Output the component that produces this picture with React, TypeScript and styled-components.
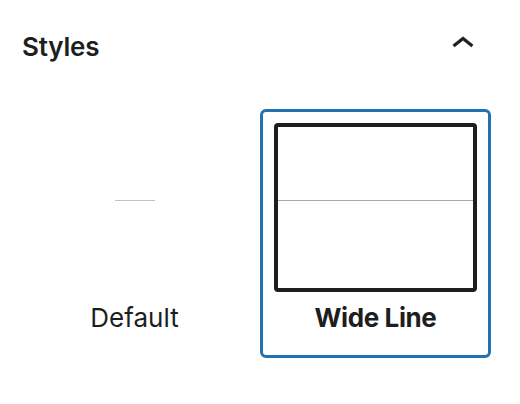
import React, { useState } from 'react';
import styled, { createGlobalStyle } from 'styled-components';

const GlobalStyle = createGlobalStyle`
    html, body {
        margin: 0;
        padding: 0;
        background: #ffffff;
    }
    body {
        font-family: Inter, "Noto Sans", "Liberation Sans", sans-serif;
        color: #1e1e1e;
    }
`;

const Panel = styled.div`
    width: 520px;
    height: 404px;
    box-sizing: border-box;
    padding: 22px 29px 0 19px;
`;

const Header = styled.div`
    display: flex;
    justify-content: space-between;
    align-items: flex-start;
`;

const Title = styled.h2`
    margin: 9px 0 0 3px;
    font-size: 26px;
    line-height: 32px;
    font-weight: 600;
    letter-spacing: -0.2px;
`;

const Toggle = styled.button`
    border: 0;
    background: transparent;
    padding: 0;
    margin-right: 6px;
    width: 44px;
    height: 44px;
    color: #1e1e1e;
    cursor: pointer;
`;

const Variants = styled.div`
    display: grid;
    grid-template-columns: repeat(2, 1fr);
    gap: 10px;
    margin-top: 43px;
`;

const Card = styled.button<{ $active: boolean }>`
    display: flex;
    flex-direction: column;
    align-items: stretch;
    box-sizing: border-box;
    padding: 11px 11px 21px;
    border: 3px solid ${(p) => (p.$active ? '#2271b1' : 'transparent')};
    border-radius: 6px;
    background: #ffffff;
    font-family: inherit;
    color: #1e1e1e;
    cursor: pointer;
`;

const Preview = styled.div<{ $active: boolean }>`
    height: 169px;
    box-sizing: border-box;
    padding-top: 73px;
    display: flex;
    flex-direction: column;
    align-items: center;
    border: 4px solid ${(p) => (p.$active ? '#1e1e1e' : 'transparent')};
    border-radius: 4px;
`;

const Separator = styled.hr<{ $wide: boolean }>`
    margin: 0;
    border: 0;
    height: 1px;
    width: ${(p) => (p.$wide ? '100%' : '40px')};
    background: ${(p) => (p.$wide ? '#a7aaad' : '#bcc4ca')};
`;

const Label = styled.span<{ $active: boolean }>`
    margin-top: 10px;
    font-size: 26px;
    line-height: 32px;
    font-weight: ${(p) => (p.$active ? 700 : 400)};
    letter-spacing: ${(p) => (p.$active ? '-0.4px' : '0')};
    text-align: center;
`;

const variants = [
    { name: 'default', label: 'Default', wide: false },
    { name: 'wide', label: 'Wide Line', wide: true },
];

export default function App() {
    const [active, setActive] = useState('wide');

    return (
        <Panel>
            <GlobalStyle />
            <Header>
                <Title>Styles</Title>
                <Toggle aria-label="Collapse">
                    <svg width="44" height="44" viewBox="0 0 24 24" fill="currentColor">
                        <path
                            d="M6.5 12.4L12 8l5.5 4.4-.9 1.2L12 10l-4.6 3.6-1-1.2z"
                            stroke="currentColor"
                            strokeWidth="0.3"
                            strokeLinejoin="round"
                        />
                    </svg>
                </Toggle>
            </Header>
            <Variants>
                {variants.map((v) => (
                    <Card key={v.name} $active={active === v.name} onClick={() => setActive(v.name)}>
                        <Preview $active={active === v.name}>
                            <Separator $wide={v.wide} />
                        </Preview>
                        <Label $active={active === v.name}>{v.label}</Label>
                    </Card>
                ))}
            </Variants>
        </Panel>
    );
}
